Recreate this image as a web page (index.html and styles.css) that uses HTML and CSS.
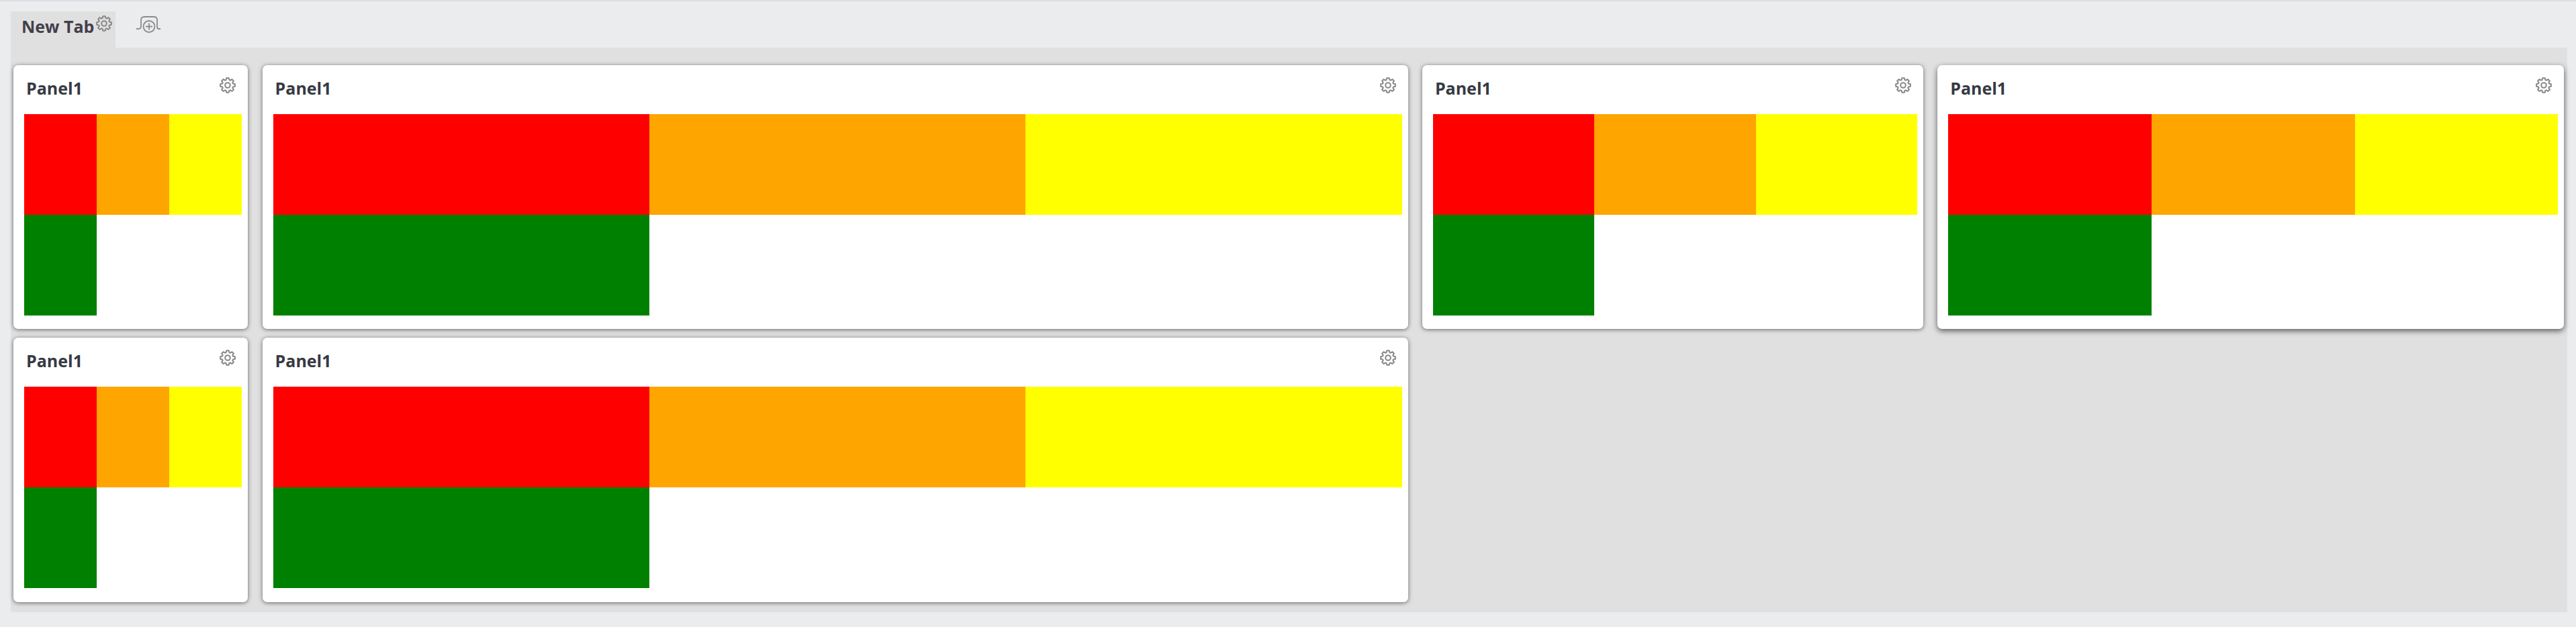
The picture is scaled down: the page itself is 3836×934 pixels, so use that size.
FILE: index.html
```html
<!DOCTYPE html>
<html lang="en">
<head>
    <meta charset="UTF-8">
    <meta name="viewport" content="width=device-width, initial-scale=1.0">
    <title>Dashboard</title>
    <link rel="stylesheet" href="styles.css">
</head>

<body>
    <svg class="icon-defs" aria-hidden="true">
        <symbol id="gear" viewBox="0 0 24 24">
            <path d="M9.57 4.06L10.28 1.14H13.72L14.43 4.06L15.9 4.67L18.47 3.1L20.9 5.53L19.33 8.1L19.94 9.57L22.86 10.28V13.72L19.94 14.43L19.33 15.9L20.9 18.47L18.47 20.9L15.9 19.33L14.43 19.94L13.72 22.86H10.28L9.57 19.94L8.1 19.33L5.53 20.9L3.1 18.47L4.67 15.9L4.06 14.43L1.14 13.72V10.28L4.06 9.57L4.67 8.1L3.1 5.53L5.53 3.1L8.1 4.67Z"/>
            <circle cx="12" cy="12" r="3.8"/>
        </symbol>
    </svg>

    <div class="tab-bar">
        <div class="tab">
            <span class="tab-name">New Tab</span>
            <svg class="gear tab-gear"><use href="#gear"/></svg>
        </div>
        <svg class="add-tab" viewBox="0 0 36 26">
            <path d="M0 20H3Q7 20 7 16V7Q7 2 12 2H26Q31 2 31 7V16Q31 20 33 20H36"/>
            <circle cx="19" cy="16.5" r="8.5"/>
            <path d="M19 11.5V21.5M14 16.5H24"/>
        </svg>
    </div>

    <main class="tab-content">
        <section class="card">
            <header class="card-head"><h2>Panel1</h2><svg class="gear"><use href="#gear"/></svg></header>
            <div class="swatches"><div class="red"></div><div class="orange"></div><div class="yellow"></div><div class="green"></div></div>
        </section>
        <section class="card">
            <header class="card-head"><h2>Panel1</h2><svg class="gear"><use href="#gear"/></svg></header>
            <div class="swatches"><div class="red"></div><div class="orange"></div><div class="yellow"></div><div class="green"></div></div>
        </section>
        <section class="card">
            <header class="card-head"><h2>Panel1</h2><svg class="gear"><use href="#gear"/></svg></header>
            <div class="swatches"><div class="red"></div><div class="orange"></div><div class="yellow"></div><div class="green"></div></div>
        </section>
        <section class="card card-hover">
            <header class="card-head"><h2>Panel1</h2><svg class="gear"><use href="#gear"/></svg></header>
            <div class="swatches"><div class="red"></div><div class="orange"></div><div class="yellow"></div><div class="green"></div></div>
        </section>
        <section class="card">
            <header class="card-head"><h2>Panel1</h2><svg class="gear"><use href="#gear"/></svg></header>
            <div class="swatches"><div class="red"></div><div class="orange"></div><div class="yellow"></div><div class="green"></div></div>
        </section>
        <section class="card">
            <header class="card-head"><h2>Panel1</h2><svg class="gear"><use href="#gear"/></svg></header>
            <div class="swatches"><div class="red"></div><div class="orange"></div><div class="yellow"></div><div class="green"></div></div>
        </section>
    </main>
</body>
</html>
```

FILE: styles.css
```css
html, body {
    height: 100%;
}

body {
    margin: 0;
    box-sizing: border-box;
    border-top: 2px solid #dcdee2;
    background-color: #ebecee;
    font-family: "Open Sans", "Liberation Sans", sans-serif;
    overflow: hidden;
}

.icon-defs {
    width: 0;
    height: 0;
    display: block;
}

.gear {
    width: 24px;
    height: 24px;
    display: block;
    fill: none;
    stroke: #888888;
    stroke-width: 2;
    stroke-linejoin: round;
}

.tab-bar {
    display: flex;
    align-items: flex-start;
    padding: 15px 0 0 16px;
    height: 54px;
}

.tab {
    display: flex;
    align-items: flex-start;
    width: 156px;
    height: 54px;
    box-sizing: border-box;
    padding: 5px 0 0 16px;
    background-color: #e0e0e0;
    border-radius: 3px 3px 0 0;
}

.tab-name {
    font-size: 25px;
    font-weight: 700;
    line-height: 34px;
    color: #433f4c;
    white-space: nowrap;
}

.tab-gear {
    margin: 1px 0 0 3px;
}

.add-tab {
    width: 36px;
    height: 26px;
    margin: 6px 0 0 31px;
    fill: none;
    stroke: #8c8c8c;
    stroke-width: 1.8;
}

.tab-content {
    display: grid;
    grid-template-columns: 349.3px 1706px 746px 933px;
    grid-template-rows: 393px 394px;
    column-gap: 21.3px;
    row-gap: 13px;
    margin: 0 13px 0 16px;
    padding: 26px 5px 15px 4px;
    background-color: #e0e0e0;
}

.card {
    padding: 0 9px 0 16px;
    background-color: white;
    border-radius: 7px;
    box-shadow: 0 1px 6px rgba(0, 0, 0, 0.55);
}

.card-hover {
    box-shadow: 0 3px 8px rgba(0, 0, 0, 0.6);
}

.card-head {
    display: flex;
    justify-content: space-between;
    align-items: flex-start;
    height: 73px;
    padding: 17px 9px 0 3px;
    box-sizing: border-box;
}

.card-head h2 {
    margin: 0;
    font-size: 25px;
    font-weight: 700;
    line-height: 34px;
    color: #363a43;
}

.card-head .gear {
    margin-top: 1px;
}

.swatches {
    display: grid;
    grid-template-columns: repeat(3, 1fr);
    grid-auto-rows: 150px;
}

.red {
    background-color: red;
}

.orange {
    background-color: orange;
}

.yellow {
    background-color: yellow;
}

.green {
    background-color: green;
}
```
